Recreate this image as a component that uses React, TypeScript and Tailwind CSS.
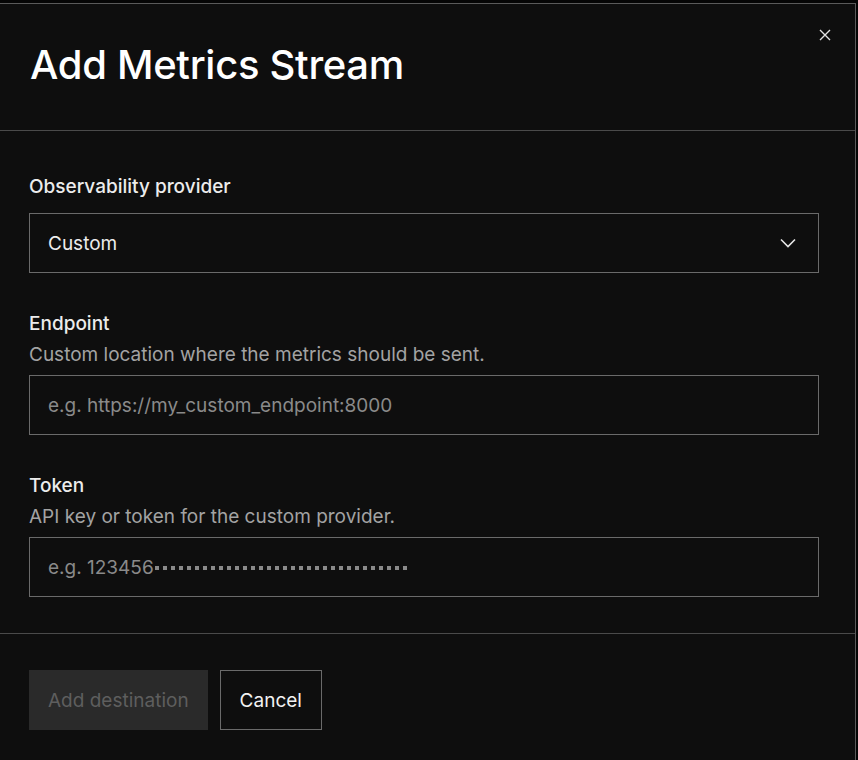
import React from "react";

const Field = ({
  label,
  desc,
  children,
}: {
  label: string;
  desc?: string;
  children: React.ReactNode;
}) => (
  <div className="flex flex-col">
    <div className="pt-[1px] text-[19px] leading-[28px] font-medium text-[#ececec]">{label}</div>
    {desc && (
      <div className="mt-[2px] pt-[1px] text-[19px] leading-[28px] text-[#a3a3a3]">{desc}</div>
    )}
    <div className={desc ? "mt-[6px]" : "mt-[12px]"}>{children}</div>
  </div>
);

export default function App() {
  return (
    <div
      className="h-[760px] w-[858px] bg-[#050505] overflow-hidden"
      style={{ fontFamily: "Inter, 'Liberation Sans', sans-serif" }}
    >
      <div className="mt-[3px] ml-[-1px] w-[857px] h-[800px] border border-[#5a5a5a] bg-[#0e0e0e] flex flex-col">
        <div className="relative pl-[30px] pt-[37px] pb-[41px]">
          <h1 className="text-[40px] leading-[48px] font-medium text-white tracking-[-0.3px]">
            Add Metrics Stream
          </h1>
          <button className="absolute right-[22px] top-[23px] w-[16px] h-[16px] flex items-center justify-center text-[#e5e5e5]">
            <svg width="12" height="12" viewBox="0 0 12 12" fill="none">
              <path d="M1 1L11 11M11 1L1 11" stroke="currentColor" strokeWidth="1.4" />
            </svg>
          </button>
        </div>
        <div className="border-t border-[#4a4a4a] pl-[29px] pt-[41px] pb-[36px] flex flex-col gap-[36px]">
          <Field label="Observability provider">
            <div className="h-[60px] w-[790px] border border-[#6a6a6a] flex items-center justify-between pl-[18px] pr-[22px]">
              <span className="pt-[2px] text-[19px] text-[#ececec]">Custom</span>
              <svg width="16" height="10" viewBox="0 0 16 10" fill="none" className="text-[#e5e5e5]">
                <path d="M1 1.5L8 8.5L15 1.5" stroke="currentColor" strokeWidth="1.6" />
              </svg>
            </div>
          </Field>
          <Field label="Endpoint" desc="Custom location where the metrics should be sent.">
            <div className="h-[60px] w-[790px] border border-[#6a6a6a] flex items-center pl-[18px]">
              <span className="pt-[2px] text-[19px] text-[#8a8a8a]">e.g. https://my_custom_endpoint:8000</span>
            </div>
          </Field>
          <Field label="Token" desc="API key or token for the custom provider.">
            <div className="h-[60px] w-[790px] border border-[#6a6a6a] flex items-center pl-[18px]">
              <span className="pt-[2px] text-[19px] text-[#8a8a8a] flex items-center">
                e.g. 123456
                <span className="flex gap-[4px] ml-[1px]">
                  {Array.from({ length: 32 }).map((_, i) => (
                    <span key={i} className="w-[4px] h-[4px] bg-[#8a8a8a]" />
                  ))}
                </span>
              </span>
            </div>
          </Field>
        </div>
        <div className="border-t border-[#4a4a4a] pl-[29px] pt-[36px] flex gap-[12px]">
          <button className="h-[60px] px-[19px] pt-[2px] bg-[#2a2a2a] text-[19px] text-[#5e5e5e]">
            Add destination
          </button>
          <button className="h-[60px] px-[19px] pt-[2px] border border-[#6a6a6a] text-[19px] text-[#f2f2f2]">
            Cancel
          </button>
        </div>
      </div>
    </div>
  );
}
